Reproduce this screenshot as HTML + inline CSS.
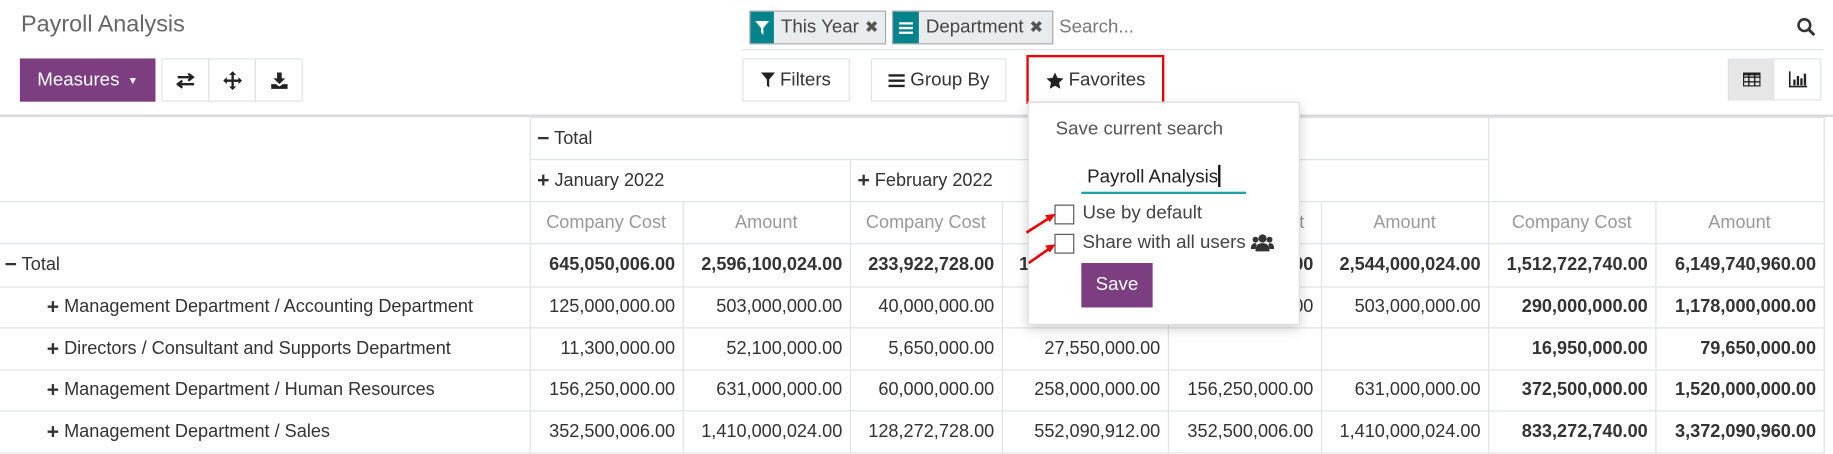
<!DOCTYPE html>
<html><head><meta charset="utf-8"><style>
*{box-sizing:border-box;margin:0;padding:0}
html,body{width:1833px;height:453px;overflow:hidden;background:#fff}
#w{position:absolute;left:0;top:0;width:1568px;height:388px;transform:scale(1.16901);transform-origin:0 0;font-family:"Liberation Sans",sans-serif;color:#4c4c4c;font-size:15.5px}
.a{position:absolute}
.btn{position:absolute;border:1px solid #dee2e6;background:#fff;display:flex;align-items:center;justify-content:center;color:#333;font-size:16px}
table{position:absolute;left:0;top:100px;border-collapse:collapse;table-layout:fixed;width:1560px}
td{border:1px solid #dee2e6;padding:0 6px;white-space:nowrap;overflow:hidden;font-size:15.5px;color:#333;vertical-align:middle;line-height:18px}
td b.p{font-size:18px;line-height:16px;display:inline-block;vertical-align:top}
td.n{text-align:right}
td.m{text-align:center;color:#999;font-size:15.5px}
tr.h td{height:36px}
.b td.n{font-weight:bold}
td.bb{font-weight:bold}
</style></head><body><div id="w">
<div class="a" style="left:18px;top:10px;font-size:20px;color:#666">Payroll Analysis</div>
<div class="a" style="left:641px;top:9px;width:117px;height:29px;border:1px solid #aaa;background:#e9ecef;display:flex;align-items:center">
<div style="width:20px;height:27px;background:#00838a;display:flex;align-items:center;justify-content:center"><svg width="12" height="14" viewBox="0 0 12 14"><path d="M0 1h12L7 7v6L5 11V7z" fill="#fff"/></svg></div>
<span style="margin-left:6px;font-size:16px;color:#444">This Year</span><span style="margin-left:5px;font-size:14px;color:#555">✖</span></div>
<div class="a" style="left:763px;top:9px;width:138px;height:29px;border:1px solid #aaa;background:#e9ecef;display:flex;align-items:center">
<div style="width:22px;height:27px;background:#00838a;display:flex;align-items:center;justify-content:center"><svg width="14" height="12"><path d="M1 2h12M1 6h12M1 10h12" stroke="#fff" stroke-width="2"/></svg></div>
<span style="margin-left:6px;font-size:16px;color:#444">Department</span><span style="margin-left:5px;font-size:14px;color:#555">✖</span></div>
<div class="a" style="left:906px;top:15px;font-size:16px;color:#777">Search...</div>
<svg class="a" style="left:1537px;top:15px" width="16" height="16"><circle cx="6.5" cy="6.5" r="5" fill="none" stroke="#333" stroke-width="2.2"/><path d="M10 10l5 5" stroke="#333" stroke-width="2.5"/></svg>
<div class="a" style="left:635px;top:42px;width:925px;height:1px;background:#dee2e6"></div>
<div class="a" style="left:17px;top:50px;width:116px;height:37px;background:#7c3e80;color:#fff;font-size:16px;display:flex;align-items:center;justify-content:center">Measures <span style="font-size:9px;margin-left:7px">▼</span></div>
<div class="btn" style="left:138px;top:50px;width:41px;height:37px"><svg width="16" height="14"><path d="M1 4h13M10 1l4 3-4 3M15 10H2M5 7l-4 3 4 3" stroke="#222" stroke-width="2" fill="none"/></svg></div>
<div class="btn" style="left:178px;top:50px;width:41px;height:37px"><svg width="16" height="16"><path d="M8 1v14M1 8h14" stroke="#222" stroke-width="2"/><path d="M8 0l3 3H5zM8 16l3-3H5zM0 8l3-3v6zM16 8l-3-3v6z" fill="#222"/></svg></div>
<div class="btn" style="left:218px;top:50px;width:41px;height:37px"><svg width="16" height="16"><path d="M6 1h4v5h3l-5 5-5-5h3z" fill="#222"/><path d="M1 11h4l3 2 3-2h4v4H1z" fill="#222"/></svg></div>
<div class="btn" style="left:635px;top:50px;width:92px;height:37px"><svg width="12" height="13" style="margin-right:4px"><path d="M0 0h12L7 6v7L5 11V6z" fill="#222"/></svg>Filters</div>
<div class="btn" style="left:745px;top:50px;width:116px;height:37px"><svg width="14" height="12" style="margin-right:5px"><path d="M0 1.5h14M0 6h14M0 10.5h14" stroke="#222" stroke-width="2"/></svg>Group By</div>
<div class="btn" style="left:880px;top:50px;width:115px;height:37px;border:none"><svg width="15" height="14" style="margin-right:4px" viewBox="0 0 24 23"><path d="M12 0l3.5 7.5 8.5 1-6.3 5.8 1.7 8.5L12 18.6 4.6 22.8l1.7-8.5L0 8.5l8.5-1z" fill="#222"/></svg>Favorites</div>
<div class="a" style="left:878px;top:47px;width:118px;height:42px;border:2px solid #e00"></div>
<div class="a" style="left:1478px;top:50px;width:80px;height:36px;border:1px solid #dee2e6"></div>
<div class="a" style="left:1479px;top:51px;width:39px;height:34px;background:#e6e6e6;display:flex;align-items:center;justify-content:center"><svg width="15" height="12"><rect x="0.5" y="0.5" width="14" height="11" fill="none" stroke="#222"/><path d="M0 4h15M0 8h15M5 0v12M10 0v12" stroke="#222" stroke-width="1.2"/><rect x="0" y="0" width="15" height="2.5" fill="#222"/></svg></div>
<svg class="a" style="left:1530px;top:61px" width="16" height="14"><path d="M1 0v13h15" stroke="#222" stroke-width="1.4" fill="none"/><path d="M4 7h2v5H4zM7 4h2v8H7zM10 6h2v6h-2zM13 2h2v10h-2z" fill="#222"/></svg>
<div class="a" style="left:0;top:98px;width:1568px;height:2px;background:#d8d8d8"></div>
<table>
<colgroup><col style="width:453px"><col style="width:131px"><col style="width:143px"><col style="width:130px"><col style="width:142px"><col style="width:131px"><col style="width:143px"><col style="width:143px"><col style="width:144px"></colgroup>
<tr class="h"><td rowspan="2" style="border-left:none;border-top:none"></td><td colspan="6"><b class="p">−</b> Total</td><td colspan="2" rowspan="2"></td></tr>
<tr class="h"><td colspan="2"><b class="p">+</b> January 2022</td><td colspan="2"><b class="p">+</b> February 2022</td><td colspan="2"><b class="p">+</b> March 2022</td></tr>
<tr class="h"><td style="border-left:none"></td><td class="m">Company Cost</td><td class="m">Amount</td><td class="m">Company Cost</td><td class="m">Amount</td><td class="m">Company Cost</td><td class="m">Amount</td><td class="m">Company Cost</td><td class="m">Amount</td></tr>
<tr class="b" style="height:37px"><td style="border-left:none;padding-left:4px"><b class="p">−</b> Total</td><td class="n">645,050,006.00</td><td class="n">2,596,100,024.00</td><td class="n">233,922,728.00</td><td class="n">1,009,640,912.00</td><td class="n">633,750,006.00</td><td class="n">2,544,000,024.00</td><td class="n">1,512,722,740.00</td><td class="n">6,149,740,960.00</td></tr>
<tr style="height:35px"><td style="border-left:none;padding-left:40px"><b class="p">+</b> Management Department / Accounting Department</td><td class="n">125,000,000.00</td><td class="n">503,000,000.00</td><td class="n">40,000,000.00</td><td class="n">172,000,000.00</td><td class="n">125,000,000.00</td><td class="n">503,000,000.00</td><td class="n bb">290,000,000.00</td><td class="n bb">1,178,000,000.00</td></tr>
<tr style="height:36px"><td style="border-left:none;padding-left:40px"><b class="p">+</b> Directors / Consultant and Supports Department</td><td class="n">11,300,000.00</td><td class="n">52,100,000.00</td><td class="n">5,650,000.00</td><td class="n">27,550,000.00</td><td></td><td></td><td class="n bb">16,950,000.00</td><td class="n bb">79,650,000.00</td></tr>
<tr style="height:35px"><td style="border-left:none;padding-left:40px"><b class="p">+</b> Management Department / Human Resources</td><td class="n">156,250,000.00</td><td class="n">631,000,000.00</td><td class="n">60,000,000.00</td><td class="n">258,000,000.00</td><td class="n">156,250,000.00</td><td class="n">631,000,000.00</td><td class="n bb">372,500,000.00</td><td class="n bb">1,520,000,000.00</td></tr>
<tr style="height:36px"><td style="border-left:none;padding-left:40px"><b class="p">+</b> Management Department / Sales</td><td class="n">352,500,006.00</td><td class="n">1,410,000,024.00</td><td class="n">128,272,728.00</td><td class="n">552,090,912.00</td><td class="n">352,500,006.00</td><td class="n">1,410,000,024.00</td><td class="n bb">833,272,740.00</td><td class="n bb">3,372,090,960.00</td></tr>
</table>
<div class="a" style="left:879px;top:87px;width:233px;height:191px;background:#fff;border:1px solid #ddd;box-shadow:0 4px 10px rgba(0,0,0,.18)"></div>
<div class="a" style="left:903px;top:102px;font-size:16px;color:#555">Save current search</div>
<div class="a" style="left:930px;top:141px;font-size:16px;color:#222">Payroll Analysis<span style="display:inline-block;width:1.5px;height:19px;background:#111;vertical-align:-4px"></span></div>
<div class="a" style="left:925px;top:164px;width:141px;height:2px;background:#21a0a8"></div>
<div class="a" style="left:902px;top:175px;width:17px;height:17px;border:1px solid #555;background:#fff"></div>
<div class="a" style="left:926px;top:174px;font-size:16px;color:#444">Use by default</div>
<div class="a" style="left:902px;top:200px;width:17px;height:17px;border:1px solid #555;background:#fff"></div>
<div class="a" style="left:926px;top:199px;font-size:16px;color:#444">Share with all users</div>
<svg class="a" style="left:1070px;top:199px" width="20" height="17"><circle cx="10" cy="5" r="3.5" fill="#333"/><circle cx="4" cy="6" r="2.5" fill="#333"/><circle cx="16" cy="6" r="2.5" fill="#333"/><path d="M4 16c0-5 2-7 6-7s6 2 6 7z M0 14c0-3 1-5 4-5l1 1-1 4z M20 14c0-3-1-5-4-5l-1 1 1 4z" fill="#333"/></svg>
<div class="a" style="left:925px;top:225px;width:61px;height:38px;background:#7c3e80;color:#fff;font-size:16px;display:flex;align-items:center;justify-content:center">Save</div>
<svg class="a" style="left:870px;top:175px" width="40" height="60"><path d="M8 24L30 10" stroke="#e00" stroke-width="2.2"/><path d="M33 8l-9 1 4 6z" fill="#e00"/><path d="M10 50L30 36" stroke="#e00" stroke-width="2.2"/><path d="M33 34l-9 1 4 6z" fill="#e00"/></svg>
</div></body></html>
